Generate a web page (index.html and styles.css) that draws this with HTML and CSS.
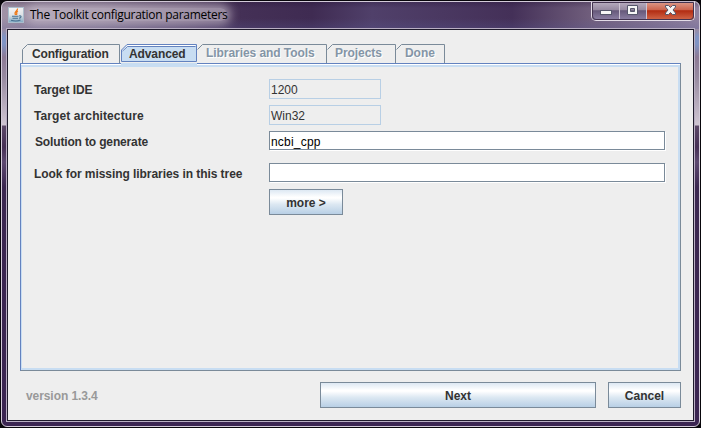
FILE: index.html
```html
<!DOCTYPE html>
<html lang="en">
<head>
<meta charset="utf-8">
<title>The Toolkit configuration parameters</title>
<link rel="stylesheet" href="styles.css">
</head>
<body>
<div class="window">
  <header class="titlebar">
    <svg class="app-icon" width="16" height="16" viewBox="0 0 16 16">
      <defs><linearGradient id="tile" x1="0" y1="0" x2="0" y2="1"><stop offset="0" stop-color="#f4f4f4"/><stop offset=".5" stop-color="#e0e5e9"/><stop offset="1" stop-color="#7ba6c2"/></linearGradient></defs>
      <rect x=".5" y=".5" width="15" height="15" fill="url(#tile)" stroke="#a9bdcc"/>
      <path d="M9.500 1.500C10 4 5.500 4.500 7.500 8M10 4C7.500 5 9.500 6 8.500 8" fill="none" stroke="#ee7b1c" stroke-width="1.300"/>
      <path d="M4 9.200H10.500M4.500 11.200H10M11 9C14 8 13.500 11 11 11.200M3 13.300C6 14.200 10 14.200 12.500 13" fill="none" stroke="#47708f" stroke-width="1.100"/>
    </svg>
    <h1 class="title">The Toolkit configuration parameters</h1>
    <div class="controls">
      <span class="control min"><svg width="28" height="18"><rect x="8.500" y="8.500" width="11" height="4" fill="#f6f6f6" stroke="#55566b"/></svg></span>
      <span class="control max"><svg width="26" height="18"><path d="M7.500 3.500h10v9h-10zM10.500 6.500v3h4v-3z" fill="#f6f6f6" fill-rule="evenodd" stroke="#55566b"/></svg></span>
      <span class="control close"><svg width="46" height="18"><path d="M18.500 3.500h3l2 2 2-2h3v1.500l-2.500 3 2.500 3v1.500h-3l-2-2-2 2h-3V11l2.500-3-2.500-3z" fill="#f6f6f6" stroke="#55566b"/></svg></span>
    </div>
  </header>
  <main class="client">
    <nav class="tabs">
      <div class="tab config"><svg width="98" height="19"><path d="M.5 19V5.500L5.500.5H97.500V19" /></svg><span>Configuration</span></div>
      <div class="tab advanced"><svg width="76" height="19"><path class="fill" d="M.5 17.500V6L6 .5H75.500V17.500Z"/><path class="shine" d="M1.500 6.500L6.500 1.500H74.500"/><path class="edge" d="M1.500 7L6.500 2.500H74.500"/></svg><span>Advanced</span></div>
      <div class="tab off libs"><svg width="130" height="19"><path d="M.5 5.500L5.500.5H129.500V19"/></svg><span>Libraries and Tools</span></div>
      <div class="tab off projects"><svg width="69" height="19"><path d="M.5 5.500L5.500.5H68.500V19"/></svg><span>Projects</span></div>
      <div class="tab off done"><svg width="49" height="19"><path d="M.5 5.500L5.500.5H48.500V19"/></svg><span>Done</span></div>
    </nav>
    <section class="panel">
      <div class="row ide"><span class="label">Target IDE</span><span class="field readonly">1200</span></div>
      <div class="row arch"><span class="label">Target architecture</span><span class="field readonly">Win32</span></div>
      <div class="row solution"><span class="label">Solution to generate</span><span class="field">ncbi_cpp</span></div>
      <div class="row missing"><span class="label">Look for missing libraries in this tree</span><span class="field"></span></div>
      <button class="button more">more &gt;</button>
    </section>
    <footer class="footer">
      <span class="version">version 1.3.4</span>
      <button class="button next">Next</button>
      <button class="button cancel">Cancel</button>
    </footer>
  </main>
</div>
</body>
</html>
```
FILE: styles.css
```css
* { box-sizing: border-box; }
body {
  margin: 0;
  background: #08060b;
  font: bold 12px/14px "Liberation Sans", sans-serif;
  color: #333;
}
.window {
  width: 699px;
  height: 426px;
  margin: 1px;
  border: 1px solid #d3cbd9;
  border-radius: 6px;
  padding: 0 4px 4px;
  background:
    linear-gradient(rgba(30, 10, 45, .25) 0, transparent 6px, transparent 16px, rgba(90, 90, 150, .25) 26px) 0 0 / 100% 27px no-repeat,
    linear-gradient(90deg, #a092a6 0, #8a7b92 100px, #63506f 190px, #443056 240px, #3f2b52 310px, #50406a 370px, #443058 510px, #715f7d 590px, #9082a0 100%) 0 0 / 100% 27px no-repeat,
    linear-gradient(#9a8ba2 0, #9a8ba2 27px, #8094c4 35px, #8094c4 42px, #8d7a95 55px, #978aa0 75px, #cfc5d2 123px, #5c4868 124px, #463055 145px, #5d4970 160px, #3b2750 185px, #3b2552 100%);
}
.titlebar {
  display: flex;
  height: 26px;
  padding-left: 2px;
  align-items: flex-start;
}
.app-icon { margin-top: 5px; position: relative; }
.title {
  margin: 6px 0 0 6px;
  font: 12px/13px "Open Sans", sans-serif;
  letter-spacing: -.28px;
  color: #000;
  white-space: nowrap;
  border-radius: 6px;
  background: rgba(200, 190, 205, .6);
  box-shadow: 0 0 9px 4px rgba(200, 190, 205, .6);
  clip-path: inset(-8px -20px -7px -24px);
}
.controls {
  display: flex;
  width: 104px;
  height: 20px;
  margin: -1px 0 0 auto;
  border: 1px solid #e3dce7;
  border-top-color: #c2b8c9;
  border-radius: 0 0 5px 5px;
  overflow: hidden;
  background: #302338;
  outline: 1px solid #43334f;
  outline-offset: -2px;
}
.control {
  height: 18px;
  background: linear-gradient(#b9aec0 0, #94879f 45%, #66587a 48%, #8d81a5 100%);
  border-right: 1px solid #cec5d3;
}
.control svg { display: block; }
.min { width: 28px; }
.max { width: 27px; }
.close { flex: 1; border-right: 0; background: linear-gradient(#dd9b8c 0, #cc624b 45%, #b22b12 48%, #d2694b 100%); }
.client {
  height: 392px;
  border: 1px solid #1e1a2b;
  outline: 1px solid #b9afc3;
  background: #eee;
  padding: 14px 12px 0;
  margin: 1px 1px 0;
}
.tabs { display: flex; height: 19px; padding-left: 2px; }
.tab { display: grid; height: 19px; }
.tab svg, .tab span { grid-area: 1 / 1; }
.tab span { padding: 3px 0 0 10px; white-space: nowrap; letter-spacing: -.16px; }
.tab path { fill: none; stroke: #7a8a99; }
.config { width: 98px; margin-right: 1px; }
.advanced { width: 76px; }
.tab.advanced span { padding-left: 8px; letter-spacing: -.1px; }
.tab .fill { fill: #c8ddf2; stroke: #6382bf; }
.tab .shine { stroke: #fff; }
.tab .edge { stroke: #6382bf; }
.off { color: #8495a6; text-shadow: 1px 1px #fff; }
.tab.off span { padding: 2px 0 0 9px; letter-spacing: -.06px; }
.tab.projects span { padding-left: 8px; }
.libs { width: 130px; }
.projects { width: 69px; }
.done { width: 49px; }
.panel {
  display: flex;
  flex-direction: column;
  width: 661px;
  height: 308px;
  padding: 15px 14px 0 13px;
  border: 1px solid #7a8a99;
  border-left-color: #6382bf;
  border-top-color: #6382bf;
  background:
    linear-gradient(#fff, #fff) 0 0 / 100% 1px no-repeat,
    linear-gradient(#c8ddf2, #c8ddf2) 0 1px / 100% 2px no-repeat,
    linear-gradient(#c8ddf2, #c8ddf2) 0 0 / 1px 100% no-repeat,
    linear-gradient(#c8ddf2, #c8ddf2) 100% 0 / 2px 100% no-repeat,
    linear-gradient(#c8ddf2, #c8ddf2) 0 100% / 100% 2px no-repeat,
    #eee;
}
/* The selected tab opens into the panel's top edge. */
.panel::before {
  content: "";
  flex: none;
  width: 76px;
  height: 3px;
  margin: -16px 0 13px 87px;
  background: #c8ddf2;
}
.row { display: flex; width: 632px; height: 20px; flex: none; }
.label { width: 235px; padding-top: 4px; white-space: nowrap; letter-spacing: -.06px; }
.arch .label { letter-spacing: .1px; }
.solution .label { letter-spacing: -.15px; }
.field {
  width: 396px;
  height: 19px;
  padding: 3px 1px 0;
  border: 1px solid #7a8a99;
  box-shadow: 1px 1px #fff;
  background: #fff;
  font-weight: normal;
  color: #000;
}
.solution .field { letter-spacing: .2px; }
.readonly { width: 112px; height: 20px; border-color: #b8cfe5; background: #eee; box-shadow: none; color: #333; }
.arch, .solution { margin-top: 6px; }
.solution .label { padding-left: 1px; }
.missing { margin-top: 12px; }
.button {
  height: 26px;
  padding: 1px 0 0;
  border: 1px solid #7a8a99;
  background: linear-gradient(#dde8f3 0, #fff 30%, #fff 34%, #dce8f2 60%, #b8cfe5 100%);
  font: inherit;
  color: #333;
}
.more { width: 74px; margin: 6px 0 0 235px; }
.footer { display: flex; margin-top: 11px; }
.version { width: 300px; padding: 7px 0 0 6px; color: #999; letter-spacing: -.08px; }
.next { width: 276px; }
.cancel { width: 73px; margin-left: 12px; }
```
